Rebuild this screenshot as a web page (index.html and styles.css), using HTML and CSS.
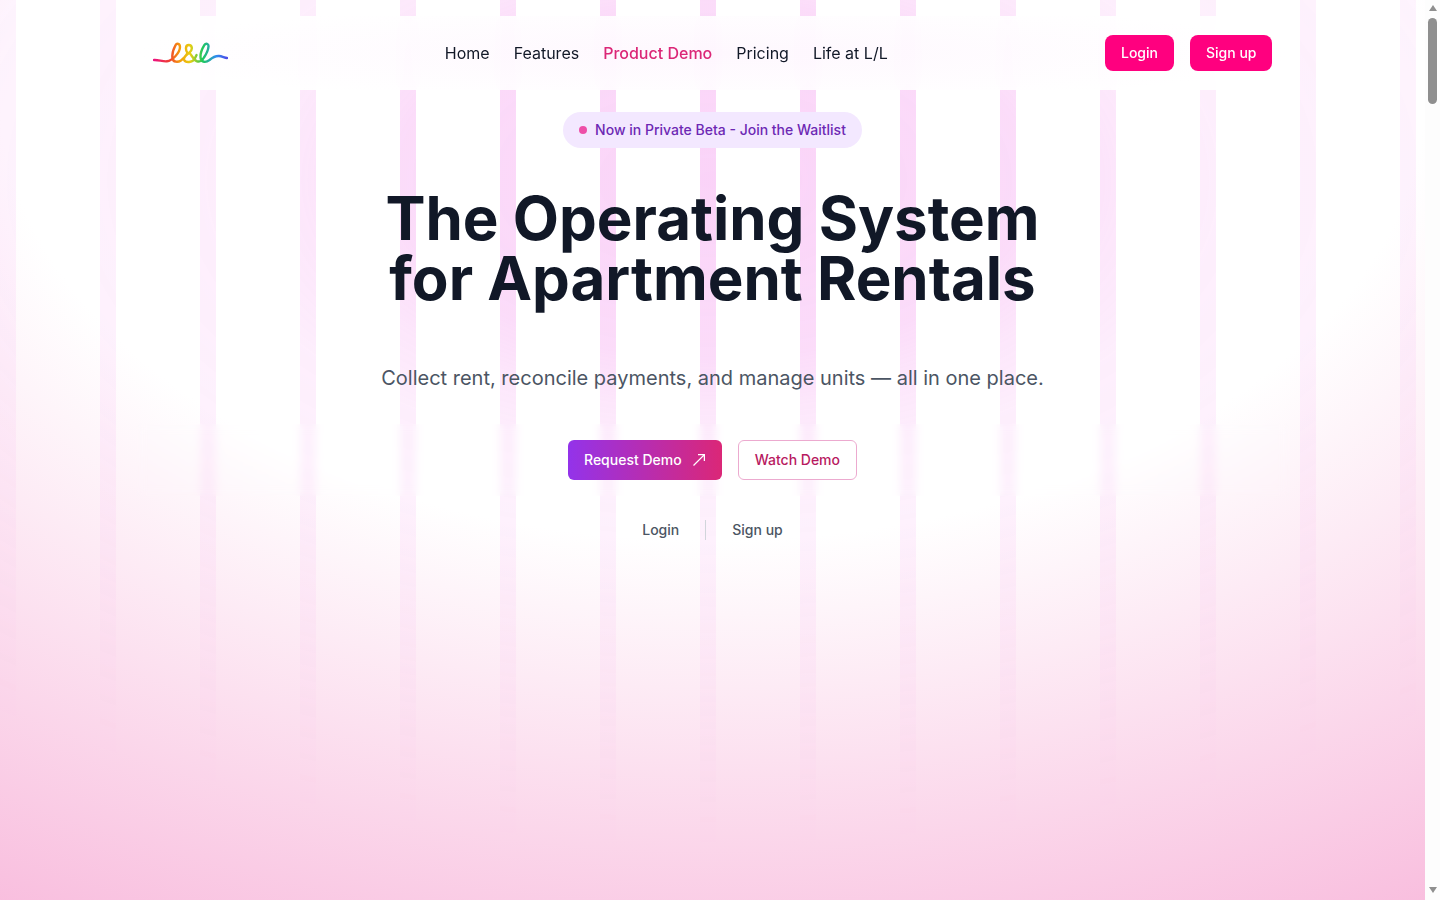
FILE: index.html
```html
<!DOCTYPE html>
<html lang="en">
<head>
  <meta charset="UTF-8">
  <meta name="viewport" content="width=device-width, initial-scale=1.0">
  <title>L&amp;L - The Operating System for Apartment Rentals</title>
  <link rel="stylesheet" href="styles.css">
</head>
<body>
  <section class="hero">
    <div class="stripes"></div>

    <nav class="navbar">
      <a class="logo" href="#" aria-label="L&amp;L">
        <svg width="75" height="22" viewBox="0 0 75 22" fill="none">
          <defs>
            <linearGradient id="rainbow" gradientUnits="userSpaceOnUse" x1="0" y1="0" x2="75" y2="0">
              <stop offset="0" stop-color="#ec0f85"/>
              <stop offset="0.22" stop-color="#ef4030"/>
              <stop offset="0.36" stop-color="#f59e0b"/>
              <stop offset="0.5" stop-color="#e6cf12"/>
              <stop offset="0.66" stop-color="#1fc95a"/>
              <stop offset="0.84" stop-color="#2f8cf0"/>
              <stop offset="1" stop-color="#4f46e5"/>
            </linearGradient>
          </defs>
          <path d="M1 18C5 17.6 10 19.8 14 19.3C19 18.8 27 11 27 5C27 1.5 23.8 .8 22.5 3.2C20.5 7 19 13 19.5 16C20 20.5 25 20.5 28 18.5C30.5 16.8 33 14 34.5 11C32.5 8.5 32 3 35.8 3C39.5 3 39.8 8 36.5 10.5C32.5 13.5 30.2 15.5 31.2 18C32.5 21 39.5 20.5 41.5 17C42.5 15.5 43 14 43.5 13M37 11.5C39 14 41 18 44 19.3C47 20.3 49.5 18 51 15.5C53 12.5 55.3 8 55.5 4.5C55.8 1.5 52.8 .8 51.3 3.2C49 7 47 13 47.7 16.5C48.5 20.5 53 20.8 56.5 18C60 15 63 13.8 66 14C69 14.2 71.5 15.8 74 16" stroke="url(#rainbow)" stroke-width="2.4" stroke-linecap="round" stroke-linejoin="round"/>
        </svg>
      </a>
      <div class="nav-links">
        <a href="#">Home</a>
        <a href="#">Features</a>
        <a class="active" href="#">Product Demo</a>
        <a href="#">Pricing</a>
        <a href="#">Life at L/L</a>
      </div>
      <div class="nav-actions">
        <a class="btn-pink" href="#">Login</a>
        <a class="btn-pink" href="#">Sign up</a>
      </div>
    </nav>

    <div class="hero-content">
      <div class="badge"><span class="dot"></span>Now in Private Beta - Join the Waitlist</div>
      <h1>The Operating System<br>for Apartment Rentals</h1>
      <p class="subtitle">Collect rent, reconcile payments, and manage units — all in one place.</p>
      <div class="cta-row">
        <a class="btn-gradient" href="#">Request Demo
          <svg width="12" height="12" viewBox="0 0 12 12" fill="none" stroke="currentColor" stroke-width="1.3">
            <path d="M.5 11.5 11.4.6M5 .6h6.4V7"/>
          </svg>
        </a>
        <a class="btn-outline" href="#">Watch Demo</a>
      </div>
      <div class="auth-links">
        <a href="#">Login</a>
        <span class="divider"></span>
        <a href="#">Sign up</a>
      </div>
    </div>
  </section>

  <aside class="scrollbar">
    <span class="arrow-up"></span>
    <span class="thumb"></span>
    <span class="arrow-down"></span>
  </aside>
</body>
</html>
```

FILE: styles.css
```css
* { box-sizing: border-box; }
body { display: flex; height: 900px; margin: 0; overflow: hidden; font-family: Inter, "Liberation Sans", sans-serif; background: #fff; color: #111827; }
a { text-decoration: none; color: inherit; }

.hero { position: relative; flex: 1; min-width: 0; overflow: hidden; background: radial-gradient(125% 125% at 50% 10%, #fff 40%, #f6a4d1 100%); }
.stripes { position: absolute; inset: 0; background: repeating-linear-gradient(90deg, rgba(235,70,225,0.24) 0 16px, transparent 16px 100px); -webkit-mask-image: radial-gradient(ellipse 85% 75% at 50% 20%, #000 0, rgba(0,0,0,0.8) 26%, rgba(0,0,0,0.55) 34%, rgba(0,0,0,0.38) 42%, rgba(0,0,0,0.28) 60%, rgba(0,0,0,0.08) 85%, transparent 100%); mask-image: radial-gradient(ellipse 85% 75% at 50% 20%, #000 0, rgba(0,0,0,0.8) 26%, rgba(0,0,0,0.55) 34%, rgba(0,0,0,0.38) 42%, rgba(0,0,0,0.28) 60%, rgba(0,0,0,0.08) 85%, transparent 100%); }

.navbar { position: relative; display: flex; align-items: center; justify-content: space-between; max-width: 1152px; height: 74px; margin: 16px auto 0; padding: 0 16px; background: radial-gradient(ellipse 50% 70% at 50% 50%, rgba(254,247,254,0.9), rgba(255,255,255,0.9)); backdrop-filter: blur(8px); }
.logo { display: flex; width: 75px; }
.nav-links { display: flex; gap: 24px; font-size: 16px; line-height: 24px; }
.nav-links .active { color: #db2777; font-weight: 500; }
.nav-actions { display: flex; gap: 16px; }
.btn-pink { display: block; padding: 8px 16px; border-radius: 8px; background: #ff007f; color: #fff; font-size: 14px; font-weight: 500; line-height: 20px; }

.hero-content { position: relative; display: flex; flex-direction: column; align-items: center; padding-top: 22px; text-align: center; }
.badge { display: flex; align-items: center; gap: 8px; padding: 8px 16px; border-radius: 999px; background: #f3e8ff; color: #6d28b4; font-size: 14px; font-weight: 500; line-height: 20px; }
.dot { width: 8px; height: 8px; border-radius: 50%; background: #ee4fa8; }
h1 { margin: 40px 0 0; font-size: 60px; font-weight: 700; line-height: 60px; color: #111827; }
.subtitle { margin: 56px 0 0; font-size: 20px; line-height: 28px; color: #4b5563; }

.cta-row { display: flex; justify-content: center; gap: 16px; width: 100%; max-width: 1152px; margin-top: 32px; padding: 16px; backdrop-filter: blur(4px); }
.btn-gradient { display: flex; align-items: center; gap: 11px; height: 40px; padding: 0 17px 0 16px; border-radius: 6px; background: linear-gradient(90deg, #9333ea, #db2777); color: #fff; font-size: 14px; font-weight: 500; line-height: 20px; }
.btn-outline { display: flex; align-items: center; height: 40px; padding: 0 16px; border: 1px solid #ecaacf; border-radius: 6px; background: #fff; color: #b81a5f; font-size: 14px; font-weight: 500; line-height: 20px; }

.auth-links { display: flex; align-items: center; gap: 26px; margin-top: 24px; color: #4b5563; font-size: 14px; font-weight: 500; line-height: 20px; }
.divider { width: 1px; height: 20px; background: #d1d5db; }

.scrollbar { display: flex; flex-direction: column; align-items: center; flex: 0 0 15px; padding: 5px 0; background: #fdfdfd; }
.arrow-up { width: 0; height: 0; border: 4.5px solid transparent; border-top: 0; border-bottom: 6px solid #8f8f8f; }
.thumb { width: 9px; height: 86px; margin-top: 7px; border-radius: 4.5px; background: #8f8f8f; }
.arrow-down { width: 0; height: 0; margin-top: auto; margin-bottom: 2px; border: 4.5px solid transparent; border-bottom: 0; border-top: 6px solid #8f8f8f; }
```
